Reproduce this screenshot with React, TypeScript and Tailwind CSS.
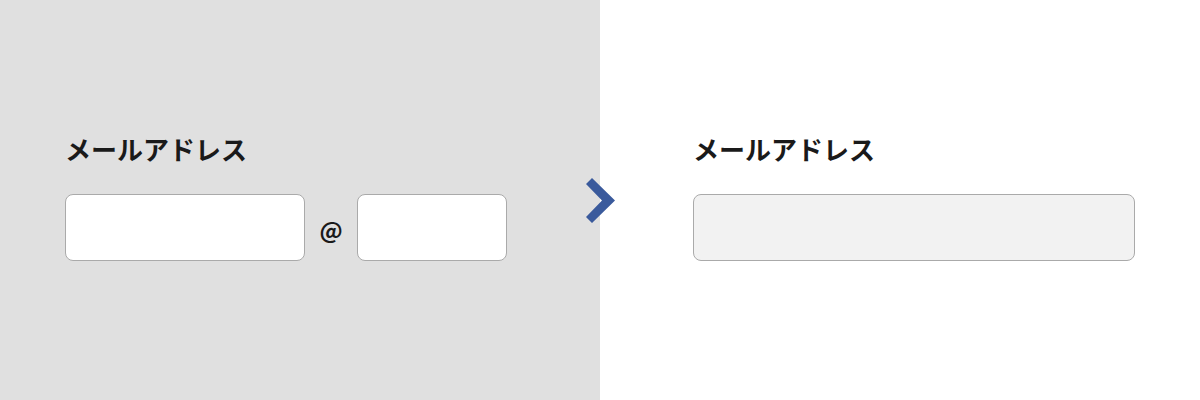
export default function App() {
  const font = { fontFamily: '"Noto Sans CJK JP", "Noto Sans", sans-serif' }
  return (
    <div className="flex w-[1200px] h-[400px]" style={font}>
      <div className="relative w-[600px] h-full bg-[#e0e0e0] pl-[65px] pt-[129px]">
        <div className="text-[26px] leading-[40px] font-bold text-[#1a1a1a]">メールアドレス</div>
        <div className="flex items-center mt-[25px]">
          <div className="w-[240px] h-[67px] rounded-[8px] border border-[#aaaaaa] bg-white" />
          <span className="w-[52px] text-center text-[23px] leading-[30px] font-bold text-[#1a1a1a] pt-[2px]">@</span>
          <div className="w-[150px] h-[67px] rounded-[8px] border border-[#aaaaaa] bg-white" />
        </div>
        <svg className="absolute left-[585px] top-[177px]" width="31" height="47" viewBox="0 0 31 47">
          <polygon points="1,7 7,1 30,23.5 7,46 1,40 17,23.5" fill="#3a5a9c" />
        </svg>
      </div>
      <div className="w-[600px] h-full bg-white pl-[93px] pt-[129px]">
        <div className="text-[26px] leading-[40px] font-bold text-[#1a1a1a]">メールアドレス</div>
        <div className="mt-[25px] w-[442px] h-[67px] rounded-[8px] border border-[#aaaaaa] bg-[#f2f2f2]" />
      </div>
    </div>
  )
}
